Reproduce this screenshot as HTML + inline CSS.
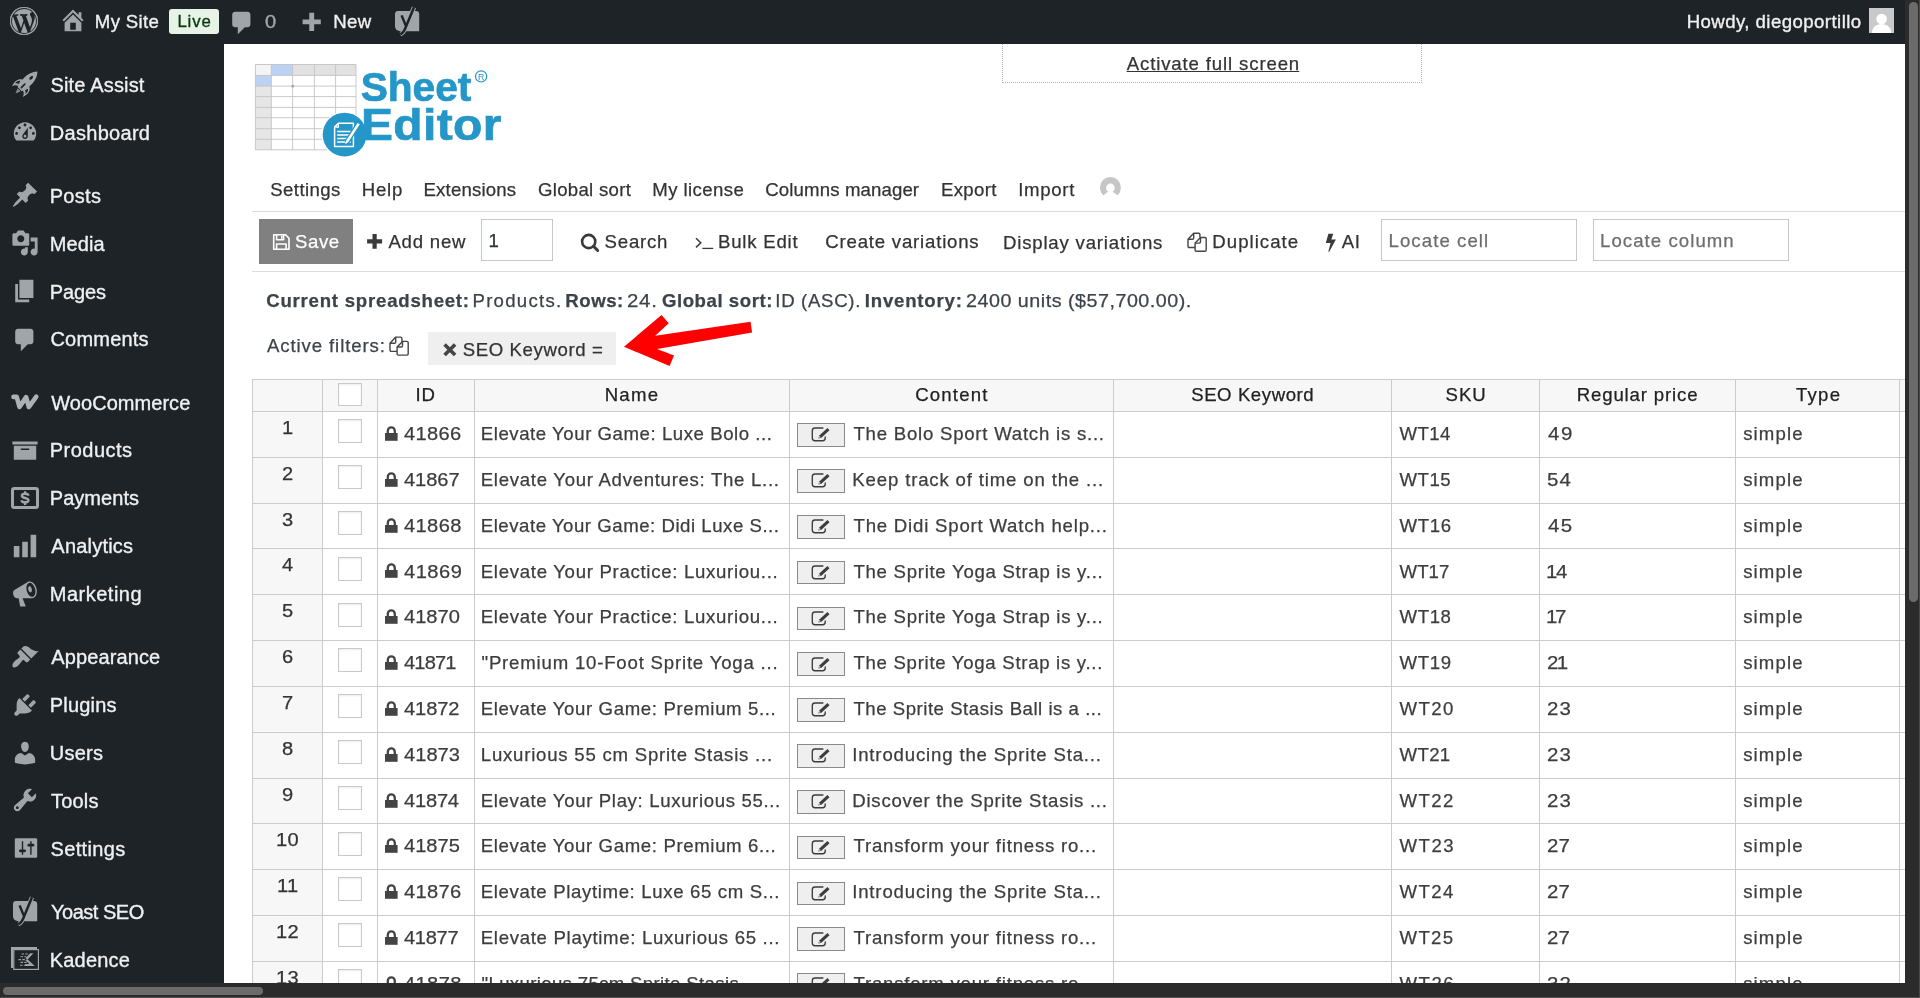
<!DOCTYPE html>
<html lang="en">
<head>
<meta charset="utf-8">
<title>WP Sheet Editor - Products</title>
<style>
html,body{margin:0;padding:0}
body{width:1920px;height:998px;overflow:hidden;position:relative;background:#fff;font-family:"Liberation Sans",sans-serif;color:#333;font-size:18.6px}
.abs,.t,svg,.ln,.cb,.eb{position:absolute}
.t{white-space:pre;line-height:1;-webkit-text-stroke:.25px currentColor}
#content,#sidemenu,#barmenu{position:absolute;left:0;top:0;width:1920px;height:998px;will-change:transform}
#sidemenu .t,#barmenu .t{-webkit-text-stroke:.35px currentColor}
svg{overflow:visible}
#bar{left:0;top:0;width:1905px;height:44px;background:#1d2327}
#side{left:0;top:44px;width:224px;height:939px;background:#1d2327}
#vs{left:1905px;top:0;width:15px;height:998px;background:#2b2b2b}
#vs i{position:absolute;left:4px;top:2px;width:8.5px;height:600px;border-radius:4.5px;background:#6b6b6b}
#hs{left:0;top:983px;width:1905px;height:15px;background:#2b2b2b}
#hs i{position:absolute;left:3px;top:4px;width:260px;height:8px;border-radius:4px;background:#6b6b6b}
.di{fill:#a0a5aa}
.ln{background:#ccc}
.cb{width:22px;height:22px;border:1px solid #c9c9c9;background:#fff;box-shadow:inset 0 1px 2px rgba(0,0,0,.08)}
.eb{width:45.7px;height:21.7px;border:1px solid #8a8a8a;background:#efefef}
.inp{border:1px solid #c8c8c8;background:#fff;box-sizing:border-box}
</style>
</head>
<body>
<!-- ================= content ================= -->
<div id="content">
<svg style="left:0;top:0" width="560" height="170" viewBox="0 0 560 170">
<rect x="255.400" y="64.500" width="100.600" height="85.300" fill="#fff"/>
<rect x="255.400" y="64.500" width="100.600" height="10.900" fill="#e2e2e2"/>
<rect x="255.400" y="64.500" width="15.900" height="85.300" fill="#e6e6e6"/>
<rect x="255.400" y="64.500" width="15.900" height="10.900" fill="#f4f4f4"/>
<rect x="271.300" y="64.500" width="21.300" height="10.900" fill="#bcd2f5"/>
<rect x="255.400" y="75.400" width="15.900" height="10.700" fill="#bcd2f5"/>
<path d="M255.4 64.500V149.800" stroke="#c4c4c4" stroke-width=".9"/>
<path d="M271.3 64.500V149.800" stroke="#c4c4c4" stroke-width=".9"/>
<path d="M292.6 64.500V149.800" stroke="#c4c4c4" stroke-width=".9"/>
<path d="M314.4 64.500V149.800" stroke="#c4c4c4" stroke-width=".9"/>
<path d="M335.6 64.500V149.800" stroke="#c4c4c4" stroke-width=".9"/>
<path d="M356.0 64.500V149.800" stroke="#c4c4c4" stroke-width=".9"/>
<path d="M255.400 64.5H356" stroke="#c4c4c4" stroke-width=".9"/>
<path d="M255.400 75.4H356" stroke="#c4c4c4" stroke-width=".9"/>
<path d="M255.400 86.1H356" stroke="#c4c4c4" stroke-width=".9"/>
<path d="M255.400 96.6H356" stroke="#c4c4c4" stroke-width=".9"/>
<path d="M255.400 107.4H356" stroke="#c4c4c4" stroke-width=".9"/>
<path d="M255.400 117.7H356" stroke="#c4c4c4" stroke-width=".9"/>
<path d="M255.400 128.7H356" stroke="#c4c4c4" stroke-width=".9"/>
<path d="M255.400 139.3H356" stroke="#c4c4c4" stroke-width=".9"/>
<path d="M255.400 149.8H356" stroke="#c4c4c4" stroke-width=".9"/>
<rect x="291.600" y="85.100" width="2.200" height="2.200" fill="#9a9a9a"/>
<circle cx="344.600" cy="134.600" r="23.200" fill="#fff"/>
<circle cx="344.600" cy="134.600" r="21.900" fill="#2596c8"/>
<path fill="none" stroke="#fff" stroke-width="1.500" stroke-linejoin="round" d="M338.400 123.200H353.400V146.600H334.600V127z"/>
<path fill="none" stroke="#fff" stroke-width="1.300" d="M338.400 123.200V127H334.600M337.200 131.500H350.800M337.200 135H350.800M337.200 138.500H350.800M337.200 142H350.800"/>
<path stroke="#2596c8" stroke-width="5.200" d="M358.400 124.200L346.600 142.400"/>
<path stroke="#fff" stroke-width="2.600" d="M358.700 123.600L347.600 140.800"/>
<path fill="#fff" d="M346.300 139.900L348.900 141.600 345.300 144.400z"/>
<circle cx="481.100" cy="76.400" r="5.600" fill="none" stroke="#2596c8" stroke-width="1.200"/>
<text x="481.100" y="79.500" font-family="Liberation Sans, sans-serif" font-size="8.800" font-weight="400" text-anchor="middle" fill="#2596c8">R</text>
</svg>
<div class="abs" style="left:1002px;top:40px;width:418px;height:41px;border:1px dotted #b5b5b5"></div>
<div class="ln" style="left:252px;top:211px;width:1653px;height:1px;background:#dcdcdc"></div>
<div class="ln" style="left:252px;top:271px;width:1653px;height:1px;background:#dcdcdc"></div>
<div class="abs" style="left:259px;top:219px;width:94px;height:44.6px;background:#808080"></div>
<div class="abs inp" style="left:481px;top:219px;width:72px;height:42px"></div>
<div class="abs inp" style="left:1381px;top:219px;width:196px;height:42px"></div>
<div class="abs inp" style="left:1593px;top:219px;width:196px;height:42px"></div>
<div class="abs" style="left:428.2px;top:332.4px;width:187.6px;height:32.2px;background:#efefef"></div>
<svg style="left:0;top:0" width="1905" height="380" viewBox="0 0 1905 380">
<g fill="none" stroke="#fff" stroke-width="1.600" stroke-linejoin="round"><path d="M273.700 234.800H285.600L289 238.200V249.200H273.700z"/><path d="M276.600 234.800V239.800H283.600V234.800M276.600 249.200V244H286.100V249.200"/></g><rect x="281" y="235.600" width="1.600" height="3.200" fill="#fff"/>
<path fill="#3a3a3a" d="M372.500 234h4.200v5.300h5.400v4.200h-5.400v5.300h-4.200v-5.300h-5.400v-4.200h5.400z"/>
<circle cx="588.700" cy="241.500" r="6.600" fill="none" stroke="#3a3a3a" stroke-width="2.600"/><path stroke="#3a3a3a" stroke-width="2.900" stroke-linecap="round" d="M593.600 246.400L597.700 250.500"/>
<path fill="none" stroke="#3a3a3a" stroke-width="1.500" d="M696 238.200L700.800 242.800 696 247.400"/><path stroke="#3a3a3a" stroke-width="1.300" d="M702.300 248.400H713.200"/>
<g transform="translate(1187.3 232.5)" fill="none" stroke="#444" stroke-width="1.400" stroke-linejoin="round"><path d="M7.800 15H2C1.200 15 .7 14.500 .7 13.700V6.800L6.400 .7H11.300C12.100 .7 12.600 1.200 12.600 2V5"/><path d="M6.400 .7V5.500C6.400 6.300 5.900 6.800 5.100 6.800H.7"/><path d="M13.200 5H17.600C18.400 5 18.900 5.500 18.900 6.300V17.400C18.900 18.200 18.400 18.700 17.600 18.700H9.100C8.300 18.700 7.800 18.200 7.800 17.400V10.600z"/><path d="M13.200 5V9.300C13.200 10.100 12.700 10.600 11.900 10.600H7.800"/></g>
<g transform="translate(389.3 336.4)" fill="none" stroke="#444" stroke-width="1.400" stroke-linejoin="round"><path d="M7.800 15H2C1.200 15 .7 14.500 .7 13.700V6.800L6.400 .7H11.300C12.100 .7 12.600 1.200 12.600 2V5"/><path d="M6.400 .7V5.500C6.400 6.300 5.900 6.800 5.100 6.800H.7"/><path d="M13.200 5H17.600C18.400 5 18.900 5.500 18.900 6.300V17.400C18.900 18.200 18.400 18.700 17.600 18.700H9.100C8.300 18.700 7.800 18.200 7.800 17.400V10.600z"/><path d="M13.200 5V9.300C13.200 10.100 12.700 10.600 11.900 10.600H7.800"/></g>
<path fill="#3a3a3a" d="M1328.400 233.700h4.900l-2 5.800h4.600l-6.700 12.300h-.9l2.300-8.700h-4.800z"/>
<path stroke="#444" stroke-width="3.600" d="M444.600 344.400L455.100 354.900M455.100 344.400L444.600 354.900"/>
<clipPath id="spc"><rect x="1095" y="170" width="32" height="25.700"/></clipPath><circle cx="1110.400" cy="187.500" r="10.500" fill="#c6c6c6" clip-path="url(#spc)"/><circle cx="1110.400" cy="188" r="4.400" fill="#fff"/><path fill="#fff" d="M1110.400 189.900L1119.200 196.400H1101.600z"/>
<path fill="#fe0000" d="M624 346.800L661.500 315 668.750 323.300 655.200 335.800 750.500 321.800 752.100 332.500 657.100 348.900 674 355.400 669.600 366z"/>
</svg>
<span class="t" style="left:360.63px;top:67.00px;font-size:40.70px;letter-spacing:-0.036px;font-weight:700;color:#2596c8;-webkit-text-stroke:.7px #2596c8;">Sheet</span>
<span class="t" style="left:361.09px;top:104.00px;font-size:43.60px;letter-spacing:0.328px;font-weight:700;color:#2596c8;transform:scaleX(1.100);transform-origin:0 0;-webkit-text-stroke:.7px #2596c8;">Editor</span>
<span class="t" style="left:270.16px;top:181.00px;font-size:18.60px;letter-spacing:0.440px;">Settings</span>
<span class="t" style="left:361.72px;top:181.00px;font-size:18.60px;letter-spacing:0.769px;">Help</span>
<span class="t" style="left:423.47px;top:181.00px;font-size:18.60px;letter-spacing:0.192px;">Extensions</span>
<span class="t" style="left:538.06px;top:181.00px;font-size:18.60px;letter-spacing:0.290px;">Global sort</span>
<span class="t" style="left:652.22px;top:181.00px;font-size:18.60px;letter-spacing:0.418px;">My license</span>
<span class="t" style="left:765.31px;top:181.00px;font-size:18.60px;letter-spacing:0.131px;">Columns manager</span>
<span class="t" style="left:940.97px;top:181.00px;font-size:18.60px;letter-spacing:0.332px;">Export</span>
<span class="t" style="left:1018.28px;top:181.00px;font-size:18.60px;letter-spacing:0.680px;">Import</span>
<span class="t" style="left:1126.71px;top:55.00px;font-size:18.60px;letter-spacing:0.865px;text-decoration:underline;text-underline-offset:1px;">Activate full scree<span style="letter-spacing:0">n</span></span>
<span class="t" style="left:294.96px;top:233.00px;font-size:18.60px;letter-spacing:0.593px;color:#fff;">Save</span>
<span class="t" style="left:388.46px;top:233.00px;font-size:18.60px;letter-spacing:0.769px;">Add new</span>
<span class="t" style="left:488.58px;top:232.00px;font-size:18.60px;color:#2c3338;">1</span>
<span class="t" style="left:604.56px;top:233.00px;font-size:18.60px;letter-spacing:0.796px;">Search</span>
<span class="t" style="left:717.97px;top:233.00px;font-size:18.60px;letter-spacing:0.784px;">Bulk Edit</span>
<span class="t" style="left:825.31px;top:233.00px;font-size:18.60px;letter-spacing:0.800px;">Create variations</span>
<span class="t" style="left:1002.97px;top:234.00px;font-size:18.60px;letter-spacing:0.808px;">Display variations</span>
<span class="t" style="left:1212.37px;top:233.00px;font-size:18.60px;letter-spacing:1.028px;">Duplicate</span>
<span class="t" style="left:1341.86px;top:233.00px;font-size:18.60px;letter-spacing:0.475px;">AI</span>
<span class="t" style="left:1388.47px;top:232.00px;font-size:18.60px;letter-spacing:1.086px;color:#6d6d6d;">Locate cell</span>
<span class="t" style="left:1599.97px;top:232.00px;font-size:18.60px;letter-spacing:1.066px;color:#6d6d6d;">Locate column</span>
<span class="t" style="left:266.24px;top:292.00px;font-size:18.60px;letter-spacing:0.776px;font-weight:700;color:#3c434a;">Current spreadsheet:</span>
<span class="t" style="left:472.47px;top:292.00px;font-size:18.60px;letter-spacing:1.272px;color:#3c434a;">Products.</span>
<span class="t" style="left:565.26px;top:292.00px;font-size:18.60px;letter-spacing:0.563px;font-weight:700;color:#3c434a;">Rows:</span>
<span class="t" style="left:627.22px;top:292.00px;font-size:18.60px;letter-spacing:0.660px;color:#3c434a;transform:scaleX(1.100);transform-origin:0 0;">24.</span>
<span class="t" style="left:661.94px;top:292.00px;font-size:18.60px;letter-spacing:0.555px;font-weight:700;color:#3c434a;">Global sort:</span>
<span class="t" style="left:775.28px;top:292.00px;font-size:18.60px;letter-spacing:0.696px;color:#3c434a;">ID (ASC).</span>
<span class="t" style="left:864.76px;top:292.00px;font-size:18.60px;letter-spacing:0.805px;font-weight:700;color:#3c434a;">Inventory:</span>
<span class="t" style="left:966.11px;top:292.00px;font-size:18.60px;letter-spacing:0.476px;color:#3c434a;transform:scaleX(1.060);transform-origin:0 0;">2400 units ($57,700.00).</span>
<span class="t" style="left:266.96px;top:337.00px;font-size:18.60px;letter-spacing:0.900px;color:#3c434a;">Active filters:</span>
<span class="t" style="left:462.66px;top:341.00px;font-size:18.60px;letter-spacing:0.621px;">SEO Keyword =</span>
<div id="table">
<div class="abs" style="left:252px;top:379px;width:1653px;height:33px;background:#f7f7f7"></div>
<div class="abs" style="left:252px;top:411px;width:71px;height:575px;background:#f7f7f7"></div>
<div class="ln" style="left:252px;top:379px;width:1653px;height:1px"></div>
<div class="ln" style="left:252px;top:411px;width:1653px;height:1px"></div>
<div class="ln" style="left:252px;top:457px;width:1653px;height:1px"></div>
<div class="ln" style="left:252px;top:503px;width:1653px;height:1px"></div>
<div class="ln" style="left:252px;top:548px;width:1653px;height:1px"></div>
<div class="ln" style="left:252px;top:594px;width:1653px;height:1px"></div>
<div class="ln" style="left:252px;top:640px;width:1653px;height:1px"></div>
<div class="ln" style="left:252px;top:686px;width:1653px;height:1px"></div>
<div class="ln" style="left:252px;top:732px;width:1653px;height:1px"></div>
<div class="ln" style="left:252px;top:778px;width:1653px;height:1px"></div>
<div class="ln" style="left:252px;top:823px;width:1653px;height:1px"></div>
<div class="ln" style="left:252px;top:869px;width:1653px;height:1px"></div>
<div class="ln" style="left:252px;top:915px;width:1653px;height:1px"></div>
<div class="ln" style="left:252px;top:961px;width:1653px;height:1px"></div>
<div class="ln" style="left:252px;top:379px;width:1px;height:610px"></div>
<div class="ln" style="left:322px;top:379px;width:1px;height:610px"></div>
<div class="ln" style="left:377px;top:379px;width:1px;height:610px"></div>
<div class="ln" style="left:474px;top:379px;width:1px;height:610px"></div>
<div class="ln" style="left:789px;top:379px;width:1px;height:610px"></div>
<div class="ln" style="left:1113px;top:379px;width:1px;height:610px"></div>
<div class="ln" style="left:1391px;top:379px;width:1px;height:610px"></div>
<div class="ln" style="left:1539px;top:379px;width:1px;height:610px"></div>
<div class="ln" style="left:1735px;top:379px;width:1px;height:610px"></div>
<div class="ln" style="left:1899px;top:379px;width:1px;height:610px"></div>
<div class="cb" style="left:338px;top:383px;height:21px"></div>
<div class="cb" style="left:338px;top:419px"></div>
<svg style="left:384px;top:424.90px" width="16" height="18" viewBox="0 0 16 18"><path fill="#444" d="M1 8h12.600v7.800H1z"/><path fill="none" stroke="#444" stroke-width="2.300" d="M3.800 8.500V5.900a3.500 3.500 0 0 1 7 0V8.500"/></svg>
<div class="eb" style="left:797px;top:423.20px"></div>
<svg style="left:810px;top:426.40px" width="22" height="18" viewBox="0 0 22 18"><path fill="none" stroke="#3c3c3c" stroke-width="1.350" stroke-linecap="round" d="M12.900 2H5C3.300 2 2.300 3 2.300 4.700V12.050C2.300 13.750 3.300 14.750 5 14.750H12.550C14.250 14.750 15.250 13.750 15.250 12.050V11"/><path fill="#3c3c3c" d="M8.300 12.500L9.290 9.410 17.450 2.020 19.530 4.320 11.370 11.710z"/><circle cx="9.600" cy="11.100" r=".75" fill="#efefef"/></svg>
<div class="cb" style="left:338px;top:465px"></div>
<svg style="left:384px;top:470.73px" width="16" height="18" viewBox="0 0 16 18"><path fill="#444" d="M1 8h12.600v7.800H1z"/><path fill="none" stroke="#444" stroke-width="2.300" d="M3.800 8.500V5.900a3.500 3.500 0 0 1 7 0V8.500"/></svg>
<div class="eb" style="left:797px;top:469.03px"></div>
<svg style="left:810px;top:472.23px" width="22" height="18" viewBox="0 0 22 18"><path fill="none" stroke="#3c3c3c" stroke-width="1.350" stroke-linecap="round" d="M12.900 2H5C3.300 2 2.300 3 2.300 4.700V12.050C2.300 13.750 3.300 14.750 5 14.750H12.550C14.250 14.750 15.250 13.750 15.250 12.050V11"/><path fill="#3c3c3c" d="M8.300 12.500L9.290 9.410 17.450 2.020 19.530 4.320 11.370 11.710z"/><circle cx="9.600" cy="11.100" r=".75" fill="#efefef"/></svg>
<div class="cb" style="left:338px;top:511px"></div>
<svg style="left:384px;top:516.56px" width="16" height="18" viewBox="0 0 16 18"><path fill="#444" d="M1 8h12.600v7.800H1z"/><path fill="none" stroke="#444" stroke-width="2.300" d="M3.800 8.500V5.900a3.500 3.500 0 0 1 7 0V8.500"/></svg>
<div class="eb" style="left:797px;top:514.86px"></div>
<svg style="left:810px;top:518.06px" width="22" height="18" viewBox="0 0 22 18"><path fill="none" stroke="#3c3c3c" stroke-width="1.350" stroke-linecap="round" d="M12.900 2H5C3.300 2 2.300 3 2.300 4.700V12.050C2.300 13.750 3.300 14.750 5 14.750H12.550C14.250 14.750 15.250 13.750 15.250 12.050V11"/><path fill="#3c3c3c" d="M8.300 12.500L9.290 9.410 17.450 2.020 19.530 4.320 11.370 11.710z"/><circle cx="9.600" cy="11.100" r=".75" fill="#efefef"/></svg>
<div class="cb" style="left:338px;top:557px"></div>
<svg style="left:384px;top:562.39px" width="16" height="18" viewBox="0 0 16 18"><path fill="#444" d="M1 8h12.600v7.800H1z"/><path fill="none" stroke="#444" stroke-width="2.300" d="M3.800 8.500V5.900a3.500 3.500 0 0 1 7 0V8.500"/></svg>
<div class="eb" style="left:797px;top:560.69px"></div>
<svg style="left:810px;top:563.89px" width="22" height="18" viewBox="0 0 22 18"><path fill="none" stroke="#3c3c3c" stroke-width="1.350" stroke-linecap="round" d="M12.900 2H5C3.300 2 2.300 3 2.300 4.700V12.050C2.300 13.750 3.300 14.750 5 14.750H12.550C14.250 14.750 15.250 13.750 15.250 12.050V11"/><path fill="#3c3c3c" d="M8.300 12.500L9.290 9.410 17.450 2.020 19.530 4.320 11.370 11.710z"/><circle cx="9.600" cy="11.100" r=".75" fill="#efefef"/></svg>
<div class="cb" style="left:338px;top:603px"></div>
<svg style="left:384px;top:608.22px" width="16" height="18" viewBox="0 0 16 18"><path fill="#444" d="M1 8h12.600v7.800H1z"/><path fill="none" stroke="#444" stroke-width="2.300" d="M3.800 8.500V5.900a3.500 3.500 0 0 1 7 0V8.500"/></svg>
<div class="eb" style="left:797px;top:606.52px"></div>
<svg style="left:810px;top:609.72px" width="22" height="18" viewBox="0 0 22 18"><path fill="none" stroke="#3c3c3c" stroke-width="1.350" stroke-linecap="round" d="M12.900 2H5C3.300 2 2.300 3 2.300 4.700V12.050C2.300 13.750 3.300 14.750 5 14.750H12.550C14.250 14.750 15.250 13.750 15.250 12.050V11"/><path fill="#3c3c3c" d="M8.300 12.500L9.290 9.410 17.450 2.020 19.530 4.320 11.370 11.710z"/><circle cx="9.600" cy="11.100" r=".75" fill="#efefef"/></svg>
<div class="cb" style="left:338px;top:648px"></div>
<svg style="left:384px;top:654.05px" width="16" height="18" viewBox="0 0 16 18"><path fill="#444" d="M1 8h12.600v7.800H1z"/><path fill="none" stroke="#444" stroke-width="2.300" d="M3.800 8.500V5.900a3.500 3.500 0 0 1 7 0V8.500"/></svg>
<div class="eb" style="left:797px;top:652.35px"></div>
<svg style="left:810px;top:655.55px" width="22" height="18" viewBox="0 0 22 18"><path fill="none" stroke="#3c3c3c" stroke-width="1.350" stroke-linecap="round" d="M12.900 2H5C3.300 2 2.300 3 2.300 4.700V12.050C2.300 13.750 3.300 14.750 5 14.750H12.550C14.250 14.750 15.250 13.750 15.250 12.050V11"/><path fill="#3c3c3c" d="M8.300 12.500L9.290 9.410 17.450 2.020 19.530 4.320 11.370 11.710z"/><circle cx="9.600" cy="11.100" r=".75" fill="#efefef"/></svg>
<div class="cb" style="left:338px;top:694px"></div>
<svg style="left:384px;top:699.88px" width="16" height="18" viewBox="0 0 16 18"><path fill="#444" d="M1 8h12.600v7.800H1z"/><path fill="none" stroke="#444" stroke-width="2.300" d="M3.800 8.500V5.900a3.500 3.500 0 0 1 7 0V8.500"/></svg>
<div class="eb" style="left:797px;top:698.18px"></div>
<svg style="left:810px;top:701.38px" width="22" height="18" viewBox="0 0 22 18"><path fill="none" stroke="#3c3c3c" stroke-width="1.350" stroke-linecap="round" d="M12.900 2H5C3.300 2 2.300 3 2.300 4.700V12.050C2.300 13.750 3.300 14.750 5 14.750H12.550C14.250 14.750 15.250 13.750 15.250 12.050V11"/><path fill="#3c3c3c" d="M8.300 12.500L9.290 9.410 17.450 2.020 19.530 4.320 11.370 11.710z"/><circle cx="9.600" cy="11.100" r=".75" fill="#efefef"/></svg>
<div class="cb" style="left:338px;top:740px"></div>
<svg style="left:384px;top:745.71px" width="16" height="18" viewBox="0 0 16 18"><path fill="#444" d="M1 8h12.600v7.800H1z"/><path fill="none" stroke="#444" stroke-width="2.300" d="M3.800 8.500V5.900a3.500 3.500 0 0 1 7 0V8.500"/></svg>
<div class="eb" style="left:797px;top:744.01px"></div>
<svg style="left:810px;top:747.21px" width="22" height="18" viewBox="0 0 22 18"><path fill="none" stroke="#3c3c3c" stroke-width="1.350" stroke-linecap="round" d="M12.900 2H5C3.300 2 2.300 3 2.300 4.700V12.050C2.300 13.750 3.300 14.750 5 14.750H12.550C14.250 14.750 15.250 13.750 15.250 12.050V11"/><path fill="#3c3c3c" d="M8.300 12.500L9.290 9.410 17.450 2.020 19.530 4.320 11.370 11.710z"/><circle cx="9.600" cy="11.100" r=".75" fill="#efefef"/></svg>
<div class="cb" style="left:338px;top:786px"></div>
<svg style="left:384px;top:791.54px" width="16" height="18" viewBox="0 0 16 18"><path fill="#444" d="M1 8h12.600v7.800H1z"/><path fill="none" stroke="#444" stroke-width="2.300" d="M3.800 8.500V5.900a3.500 3.500 0 0 1 7 0V8.500"/></svg>
<div class="eb" style="left:797px;top:789.84px"></div>
<svg style="left:810px;top:793.04px" width="22" height="18" viewBox="0 0 22 18"><path fill="none" stroke="#3c3c3c" stroke-width="1.350" stroke-linecap="round" d="M12.900 2H5C3.300 2 2.300 3 2.300 4.700V12.050C2.300 13.750 3.300 14.750 5 14.750H12.550C14.250 14.750 15.250 13.750 15.250 12.050V11"/><path fill="#3c3c3c" d="M8.300 12.500L9.290 9.410 17.450 2.020 19.530 4.320 11.370 11.710z"/><circle cx="9.600" cy="11.100" r=".75" fill="#efefef"/></svg>
<div class="cb" style="left:338px;top:832px"></div>
<svg style="left:384px;top:837.37px" width="16" height="18" viewBox="0 0 16 18"><path fill="#444" d="M1 8h12.600v7.800H1z"/><path fill="none" stroke="#444" stroke-width="2.300" d="M3.800 8.500V5.900a3.500 3.500 0 0 1 7 0V8.500"/></svg>
<div class="eb" style="left:797px;top:835.67px"></div>
<svg style="left:810px;top:838.87px" width="22" height="18" viewBox="0 0 22 18"><path fill="none" stroke="#3c3c3c" stroke-width="1.350" stroke-linecap="round" d="M12.900 2H5C3.300 2 2.300 3 2.300 4.700V12.050C2.300 13.750 3.300 14.750 5 14.750H12.550C14.250 14.750 15.250 13.750 15.250 12.050V11"/><path fill="#3c3c3c" d="M8.300 12.500L9.290 9.410 17.450 2.020 19.530 4.320 11.370 11.710z"/><circle cx="9.600" cy="11.100" r=".75" fill="#efefef"/></svg>
<div class="cb" style="left:338px;top:877px"></div>
<svg style="left:384px;top:883.20px" width="16" height="18" viewBox="0 0 16 18"><path fill="#444" d="M1 8h12.600v7.800H1z"/><path fill="none" stroke="#444" stroke-width="2.300" d="M3.800 8.500V5.900a3.500 3.500 0 0 1 7 0V8.500"/></svg>
<div class="eb" style="left:797px;top:881.50px"></div>
<svg style="left:810px;top:884.70px" width="22" height="18" viewBox="0 0 22 18"><path fill="none" stroke="#3c3c3c" stroke-width="1.350" stroke-linecap="round" d="M12.900 2H5C3.300 2 2.300 3 2.300 4.700V12.050C2.300 13.750 3.300 14.750 5 14.750H12.550C14.250 14.750 15.250 13.750 15.250 12.050V11"/><path fill="#3c3c3c" d="M8.300 12.500L9.290 9.410 17.450 2.020 19.530 4.320 11.370 11.710z"/><circle cx="9.600" cy="11.100" r=".75" fill="#efefef"/></svg>
<div class="cb" style="left:338px;top:923px"></div>
<svg style="left:384px;top:929.03px" width="16" height="18" viewBox="0 0 16 18"><path fill="#444" d="M1 8h12.600v7.800H1z"/><path fill="none" stroke="#444" stroke-width="2.300" d="M3.800 8.500V5.900a3.500 3.500 0 0 1 7 0V8.500"/></svg>
<div class="eb" style="left:797px;top:927.33px"></div>
<svg style="left:810px;top:930.53px" width="22" height="18" viewBox="0 0 22 18"><path fill="none" stroke="#3c3c3c" stroke-width="1.350" stroke-linecap="round" d="M12.900 2H5C3.300 2 2.300 3 2.300 4.700V12.050C2.300 13.750 3.300 14.750 5 14.750H12.550C14.250 14.750 15.250 13.750 15.250 12.050V11"/><path fill="#3c3c3c" d="M8.300 12.500L9.290 9.410 17.450 2.020 19.530 4.320 11.370 11.710z"/><circle cx="9.600" cy="11.100" r=".75" fill="#efefef"/></svg>
<div class="cb" style="left:338px;top:969px"></div>
<svg style="left:384px;top:974.86px" width="16" height="18" viewBox="0 0 16 18"><path fill="#444" d="M1 8h12.600v7.800H1z"/><path fill="none" stroke="#444" stroke-width="2.300" d="M3.800 8.500V5.900a3.500 3.500 0 0 1 7 0V8.500"/></svg>
<div class="eb" style="left:797px;top:973.16px"></div>
<svg style="left:810px;top:976.36px" width="22" height="18" viewBox="0 0 22 18"><path fill="none" stroke="#3c3c3c" stroke-width="1.350" stroke-linecap="round" d="M12.900 2H5C3.300 2 2.300 3 2.300 4.700V12.050C2.300 13.750 3.300 14.750 5 14.750H12.550C14.250 14.750 15.250 13.750 15.250 12.050V11"/><path fill="#3c3c3c" d="M8.300 12.500L9.290 9.410 17.450 2.020 19.530 4.320 11.370 11.710z"/><circle cx="9.600" cy="11.100" r=".75" fill="#efefef"/></svg>
<span class="t" style="left:415.58px;top:386.00px;font-size:18.60px;letter-spacing:0.713px;color:#222;">ID</span>
<span class="t" style="left:604.67px;top:386.00px;font-size:18.60px;letter-spacing:1.281px;color:#222;">Name</span>
<span class="t" style="left:915.26px;top:386.00px;font-size:18.60px;letter-spacing:1.159px;color:#222;">Content</span>
<span class="t" style="left:1191.16px;top:386.00px;font-size:18.60px;letter-spacing:0.576px;color:#222;">SEO Keyword</span>
<span class="t" style="left:1445.46px;top:386.00px;font-size:18.60px;letter-spacing:1.023px;color:#222;">SKU</span>
<span class="t" style="left:1576.77px;top:386.00px;font-size:18.60px;letter-spacing:0.847px;color:#222;">Regular price</span>
<span class="t" style="left:1795.88px;top:386.00px;font-size:18.60px;letter-spacing:1.277px;color:#222;">Type</span>
<span class="t rn" style="left:281.71px;top:419.00px;font-size:18.60px;letter-spacing:0.300px;transform:scaleX(1.080);transform-origin:0 0;">1</span>
<span class="t" style="left:403.64px;top:425.00px;font-size:18.60px;letter-spacing:0.321px;color:#3d3d3d;transform:scaleX(1.080);transform-origin:0 0;">41866</span>
<span class="t" style="left:480.77px;top:425.00px;font-size:18.60px;letter-spacing:0.558px;color:#3d3d3d;">Elevate Your Game: Luxe Bolo ...</span>
<span class="t" style="left:853.48px;top:425.00px;font-size:18.60px;letter-spacing:0.769px;color:#3d3d3d;">The Bolo Sport Watch is s...</span>
<span class="t" style="left:1399.62px;top:425.00px;font-size:18.60px;letter-spacing:0.378px;color:#3d3d3d;">WT14</span>
<span class="t" style="left:1547.53px;top:425.00px;font-size:18.60px;letter-spacing:1.529px;color:#3d3d3d;transform:scaleX(1.100);transform-origin:0 0;">49</span>
<span class="t" style="left:1743.18px;top:425.00px;font-size:18.60px;letter-spacing:1.122px;color:#3d3d3d;">simple</span>
<span class="t rn" style="left:281.71px;top:465.00px;font-size:18.60px;letter-spacing:0.300px;transform:scaleX(1.080);transform-origin:0 0;">2</span>
<span class="t" style="left:403.64px;top:471.00px;font-size:18.60px;letter-spacing:-0.066px;color:#3d3d3d;transform:scaleX(1.080);transform-origin:0 0;">41867</span>
<span class="t" style="left:480.77px;top:471.00px;font-size:18.60px;letter-spacing:0.705px;color:#3d3d3d;">Elevate Your Adventures: The L...</span>
<span class="t" style="left:852.37px;top:471.00px;font-size:18.60px;letter-spacing:0.837px;color:#3d3d3d;">Keep track of time on the ...</span>
<span class="t" style="left:1399.62px;top:471.00px;font-size:18.60px;letter-spacing:0.456px;color:#3d3d3d;">WT15</span>
<span class="t" style="left:1547.18px;top:471.00px;font-size:18.60px;letter-spacing:0.966px;color:#3d3d3d;transform:scaleX(1.100);transform-origin:0 0;">54</span>
<span class="t" style="left:1743.18px;top:471.00px;font-size:18.60px;letter-spacing:1.122px;color:#3d3d3d;">simple</span>
<span class="t rn" style="left:281.71px;top:511.00px;font-size:18.60px;letter-spacing:0.300px;transform:scaleX(1.080);transform-origin:0 0;">3</span>
<span class="t" style="left:403.64px;top:517.00px;font-size:18.60px;letter-spacing:0.365px;color:#3d3d3d;transform:scaleX(1.080);transform-origin:0 0;">41868</span>
<span class="t" style="left:480.77px;top:517.00px;font-size:18.60px;letter-spacing:0.534px;color:#3d3d3d;">Elevate Your Game: Didi Luxe S...</span>
<span class="t" style="left:853.48px;top:517.00px;font-size:18.60px;letter-spacing:0.799px;color:#3d3d3d;">The Didi Sport Watch help...</span>
<span class="t" style="left:1399.62px;top:517.00px;font-size:18.60px;letter-spacing:0.668px;color:#3d3d3d;">WT16</span>
<span class="t" style="left:1547.53px;top:517.00px;font-size:18.60px;letter-spacing:1.157px;color:#3d3d3d;transform:scaleX(1.100);transform-origin:0 0;">45</span>
<span class="t" style="left:1743.18px;top:517.00px;font-size:18.60px;letter-spacing:1.122px;color:#3d3d3d;">simple</span>
<span class="t rn" style="left:281.71px;top:556.00px;font-size:18.60px;letter-spacing:0.300px;transform:scaleX(1.080);transform-origin:0 0;">4</span>
<span class="t" style="left:403.64px;top:563.00px;font-size:18.60px;letter-spacing:0.453px;color:#3d3d3d;transform:scaleX(1.080);transform-origin:0 0;">41869</span>
<span class="t" style="left:480.77px;top:563.00px;font-size:18.60px;letter-spacing:0.698px;color:#3d3d3d;">Elevate Your Practice: Luxuriou...</span>
<span class="t" style="left:853.48px;top:563.00px;font-size:18.60px;letter-spacing:0.718px;color:#3d3d3d;">The Sprite Yoga Strap is y...</span>
<span class="t" style="left:1399.62px;top:563.00px;font-size:18.60px;letter-spacing:0.041px;color:#3d3d3d;">WT17</span>
<span class="t" style="left:1546.44px;top:563.00px;font-size:18.60px;letter-spacing:-1.180px;color:#3d3d3d;transform:scaleX(1.100);transform-origin:0 0;">14</span>
<span class="t" style="left:1743.18px;top:563.00px;font-size:18.60px;letter-spacing:1.122px;color:#3d3d3d;">simple</span>
<span class="t rn" style="left:281.71px;top:602.00px;font-size:18.60px;letter-spacing:0.300px;transform:scaleX(1.080);transform-origin:0 0;">5</span>
<span class="t" style="left:403.64px;top:608.00px;font-size:18.60px;color:#3d3d3d;transform:scaleX(1.080);transform-origin:0 0;">41870</span>
<span class="t" style="left:480.77px;top:608.00px;font-size:18.60px;letter-spacing:0.698px;color:#3d3d3d;">Elevate Your Practice: Luxuriou...</span>
<span class="t" style="left:853.48px;top:608.00px;font-size:18.60px;letter-spacing:0.718px;color:#3d3d3d;">The Sprite Yoga Strap is y...</span>
<span class="t" style="left:1399.62px;top:608.00px;font-size:18.60px;letter-spacing:0.565px;color:#3d3d3d;">WT18</span>
<span class="t" style="left:1546.44px;top:608.00px;font-size:18.60px;letter-spacing:-2.063px;color:#3d3d3d;transform:scaleX(1.100);transform-origin:0 0;">17</span>
<span class="t" style="left:1743.18px;top:608.00px;font-size:18.60px;letter-spacing:1.122px;color:#3d3d3d;">simple</span>
<span class="t rn" style="left:281.71px;top:648.00px;font-size:18.60px;letter-spacing:0.300px;transform:scaleX(1.080);transform-origin:0 0;">6</span>
<span class="t" style="left:403.64px;top:654.00px;font-size:18.60px;letter-spacing:-0.790px;color:#3d3d3d;transform:scaleX(1.080);transform-origin:0 0;">41871</span>
<span class="t" style="left:481.51px;top:654.00px;font-size:18.60px;letter-spacing:0.806px;color:#3d3d3d;">&quot;Premium 10-Foot Sprite Yoga ...</span>
<span class="t" style="left:853.48px;top:654.00px;font-size:18.60px;letter-spacing:0.707px;color:#3d3d3d;">The Sprite Yoga Strap is y...</span>
<span class="t" style="left:1399.62px;top:654.00px;font-size:18.60px;letter-spacing:0.590px;color:#3d3d3d;">WT19</span>
<span class="t" style="left:1546.97px;top:654.00px;font-size:18.60px;letter-spacing:-1.571px;color:#3d3d3d;transform:scaleX(1.100);transform-origin:0 0;">21</span>
<span class="t" style="left:1743.18px;top:654.00px;font-size:18.60px;letter-spacing:1.122px;color:#3d3d3d;">simple</span>
<span class="t rn" style="left:281.71px;top:694.00px;font-size:18.60px;letter-spacing:0.300px;transform:scaleX(1.080);transform-origin:0 0;">7</span>
<span class="t" style="left:403.64px;top:700.00px;font-size:18.60px;letter-spacing:-0.089px;color:#3d3d3d;transform:scaleX(1.080);transform-origin:0 0;">41872</span>
<span class="t" style="left:480.77px;top:700.00px;font-size:18.60px;letter-spacing:0.636px;color:#3d3d3d;">Elevate Your Game: Premium 5...</span>
<span class="t" style="left:853.48px;top:700.00px;font-size:18.60px;letter-spacing:0.523px;color:#3d3d3d;">The Sprite Stasis Ball is a ...</span>
<span class="t" style="left:1399.62px;top:700.00px;font-size:18.60px;letter-spacing:1.405px;color:#3d3d3d;">WT20</span>
<span class="t" style="left:1546.97px;top:700.00px;font-size:18.60px;letter-spacing:1.065px;color:#3d3d3d;transform:scaleX(1.100);transform-origin:0 0;">23</span>
<span class="t" style="left:1743.18px;top:700.00px;font-size:18.60px;letter-spacing:1.122px;color:#3d3d3d;">simple</span>
<span class="t rn" style="left:281.71px;top:740.00px;font-size:18.60px;letter-spacing:0.300px;transform:scaleX(1.080);transform-origin:0 0;">8</span>
<span class="t" style="left:403.64px;top:746.00px;font-size:18.60px;letter-spacing:0.020px;color:#3d3d3d;transform:scaleX(1.080);transform-origin:0 0;">41873</span>
<span class="t" style="left:480.77px;top:746.00px;font-size:18.60px;letter-spacing:0.772px;color:#3d3d3d;">Luxurious 55 cm Sprite Stasis ...</span>
<span class="t" style="left:852.18px;top:746.00px;font-size:18.60px;letter-spacing:0.839px;color:#3d3d3d;">Introducing the Sprite Sta...</span>
<span class="t" style="left:1399.62px;top:746.00px;font-size:18.60px;letter-spacing:0.332px;color:#3d3d3d;">WT21</span>
<span class="t" style="left:1546.97px;top:746.00px;font-size:18.60px;letter-spacing:1.065px;color:#3d3d3d;transform:scaleX(1.100);transform-origin:0 0;">23</span>
<span class="t" style="left:1743.18px;top:746.00px;font-size:18.60px;letter-spacing:1.122px;color:#3d3d3d;">simple</span>
<span class="t rn" style="left:281.71px;top:786.00px;font-size:18.60px;letter-spacing:0.300px;transform:scaleX(1.080);transform-origin:0 0;">9</span>
<span class="t" style="left:403.64px;top:792.00px;font-size:18.60px;letter-spacing:-0.187px;color:#3d3d3d;transform:scaleX(1.080);transform-origin:0 0;">41874</span>
<span class="t" style="left:480.77px;top:792.00px;font-size:18.60px;letter-spacing:0.650px;color:#3d3d3d;">Elevate Your Play: Luxurious 55...</span>
<span class="t" style="left:852.37px;top:792.00px;font-size:18.60px;letter-spacing:0.723px;color:#3d3d3d;">Discover the Sprite Stasis ...</span>
<span class="t" style="left:1399.62px;top:792.00px;font-size:18.60px;letter-spacing:1.341px;color:#3d3d3d;">WT22</span>
<span class="t" style="left:1546.97px;top:792.00px;font-size:18.60px;letter-spacing:1.065px;color:#3d3d3d;transform:scaleX(1.100);transform-origin:0 0;">23</span>
<span class="t" style="left:1743.18px;top:792.00px;font-size:18.60px;letter-spacing:1.122px;color:#3d3d3d;">simple</span>
<span class="t rn" style="left:275.97px;top:831.00px;font-size:18.60px;letter-spacing:0.300px;transform:scaleX(1.080);transform-origin:0 0;">10</span>
<span class="t" style="left:403.64px;top:837.00px;font-size:18.60px;letter-spacing:0.011px;color:#3d3d3d;transform:scaleX(1.080);transform-origin:0 0;">41875</span>
<span class="t" style="left:480.77px;top:837.00px;font-size:18.60px;letter-spacing:0.636px;color:#3d3d3d;">Elevate Your Game: Premium 6...</span>
<span class="t" style="left:853.48px;top:837.00px;font-size:18.60px;letter-spacing:0.787px;color:#3d3d3d;">Transform your fitness ro...</span>
<span class="t" style="left:1399.62px;top:837.00px;font-size:18.60px;letter-spacing:1.435px;color:#3d3d3d;">WT23</span>
<span class="t" style="left:1546.97px;top:837.00px;font-size:18.60px;letter-spacing:0.183px;color:#3d3d3d;transform:scaleX(1.100);transform-origin:0 0;">27</span>
<span class="t" style="left:1743.18px;top:837.00px;font-size:18.60px;letter-spacing:1.122px;color:#3d3d3d;">simple</span>
<span class="t rn" style="left:276.71px;top:877.00px;font-size:18.60px;letter-spacing:0.300px;transform:scaleX(1.080);transform-origin:0 0;">11</span>
<span class="t" style="left:403.64px;top:883.00px;font-size:18.60px;letter-spacing:0.321px;color:#3d3d3d;transform:scaleX(1.080);transform-origin:0 0;">41876</span>
<span class="t" style="left:480.77px;top:883.00px;font-size:18.60px;letter-spacing:0.648px;color:#3d3d3d;">Elevate Playtime: Luxe 65 cm S...</span>
<span class="t" style="left:852.18px;top:883.00px;font-size:18.60px;letter-spacing:0.839px;color:#3d3d3d;">Introducing the Sprite Sta...</span>
<span class="t" style="left:1399.62px;top:883.00px;font-size:18.60px;letter-spacing:1.344px;color:#3d3d3d;">WT24</span>
<span class="t" style="left:1546.97px;top:883.00px;font-size:18.60px;letter-spacing:0.183px;color:#3d3d3d;transform:scaleX(1.100);transform-origin:0 0;">27</span>
<span class="t" style="left:1743.18px;top:883.00px;font-size:18.60px;letter-spacing:1.122px;color:#3d3d3d;">simple</span>
<span class="t rn" style="left:275.97px;top:923.00px;font-size:18.60px;letter-spacing:0.300px;transform:scaleX(1.080);transform-origin:0 0;">12</span>
<span class="t" style="left:403.64px;top:929.00px;font-size:18.60px;letter-spacing:-0.274px;color:#3d3d3d;transform:scaleX(1.080);transform-origin:0 0;">41877</span>
<span class="t" style="left:480.77px;top:929.00px;font-size:18.60px;letter-spacing:0.690px;color:#3d3d3d;">Elevate Playtime: Luxurious 65 ...</span>
<span class="t" style="left:853.48px;top:929.00px;font-size:18.60px;letter-spacing:0.787px;color:#3d3d3d;">Transform your fitness ro...</span>
<span class="t" style="left:1399.62px;top:929.00px;font-size:18.60px;letter-spacing:1.290px;color:#3d3d3d;">WT25</span>
<span class="t" style="left:1546.97px;top:929.00px;font-size:18.60px;letter-spacing:0.183px;color:#3d3d3d;transform:scaleX(1.100);transform-origin:0 0;">27</span>
<span class="t" style="left:1743.18px;top:929.00px;font-size:18.60px;letter-spacing:1.122px;color:#3d3d3d;">simple</span>
<span class="t rn" style="left:275.97px;top:969.00px;font-size:18.60px;letter-spacing:0.300px;transform:scaleX(1.080);transform-origin:0 0;">13</span>
<span class="t" style="left:403.64px;top:975.00px;font-size:18.60px;letter-spacing:0.365px;color:#3d3d3d;transform:scaleX(1.080);transform-origin:0 0;">41878</span>
<span class="t" style="left:481.51px;top:975.00px;font-size:18.60px;letter-spacing:0.350px;color:#3d3d3d;">&quot;Luxurious 75cm Sprite Stasis...</span>
<span class="t" style="left:853.48px;top:975.00px;font-size:18.60px;letter-spacing:0.787px;color:#3d3d3d;">Transform your fitness ro...</span>
<span class="t" style="left:1399.62px;top:975.00px;font-size:18.60px;letter-spacing:1.435px;color:#3d3d3d;">WT26</span>
<span class="t" style="left:1547.22px;top:975.00px;font-size:18.60px;letter-spacing:0.956px;color:#3d3d3d;transform:scaleX(1.100);transform-origin:0 0;">32</span>
<span class="t" style="left:1743.18px;top:975.00px;font-size:18.60px;letter-spacing:1.122px;color:#3d3d3d;">simple</span>
</div>
</div>
<!-- ================= sidebar ================= -->
<div id="side" class="abs"></div>
<div id="sidemenu">
<svg class="di" style="left:11.2px;top:118.0px" width="28" height="28" viewBox="0 0 20 20"><path fill="#a0a5aa" d="M3.76 16h12.48c1.1-1.37 1.76-3.11 1.76-5 0-4.42-3.58-8-8-8s-8 3.580-8 8c0 1.890.660 3.630 1.760 5zM10 4c.55 0 1 .45 1 1s-.45 1-1 1-1-.45-1-1 .45-1 1-1zM6 6c.55 0 1 .45 1 1s-.45 1-1 1-1-.45-1-1 .45-1 1-1zm8 0c.55 0 1 .45 1 1s-.45 1-1 1-1-.45-1-1 .45-1 1-1zm-5.370 5.550L12 7v6c0 1.100-.9 2-2 2s-2-.9-2-2c0-.570.240-1.080.630-1.450zM4 10c.55 0 1 .45 1 1s-.45 1-1 1-1-.45-1-1 .45-1 1-1zm12 0c.55 0 1 .45 1 1s-.45 1-1 1-1-.45-1-1 .45-1 1-1zm-5 3c0-.55-.45-1-1-1s-1 .45-1 1 .45 1 1 1 1-.45 1-1z"/></svg>
<svg class="di" style="left:11.2px;top:180.9px" width="28" height="28" viewBox="0 0 20 20"><path fill="#a0a5aa" d="M10.44 3.02l1.82-1.82 6.36 6.35-1.83 1.820c-1.050-.680-2.480-.570-3.410.360l-.75.75c-.92.930-1.040 2.350-.350 3.410l-1.830 1.820-2.410-2.410-2.800 2.790c-.42.420-3.380 2.710-3.800 2.290s1.860-3.390 2.280-3.810l2.790-2.790L4.100 9.360l1.830-1.820c1.050.69 2.480.570 3.400-.360l.75-.75c.93-.92 1.050-2.350.36-3.410z"/></svg>
<svg class="di" style="left:11.2px;top:229.3px" width="28" height="28" viewBox="0 0 20 20"><path fill="#a0a5aa" d="M13 11V4c0-.55-.45-1-1-1h-1.670L9 1H5L3.670 3H2c-.55 0-1 .45-1 1v7c0 .55.45 1 1 1h10c.55 0 1-.45 1-1zM7 4.500c1.380 0 2.500 1.120 2.500 2.500S8.380 9.500 7 9.500 4.500 8.380 4.500 7 5.620 4.500 7 4.500zM14 6h5v10.500c0 1.380-1.120 2.500-2.500 2.500S14 17.880 14 16.500s1.120-2.500 2.500-2.500c.17 0 .34.020.5.050V9h-3V6zm-4 8.050V13h2v3.500c0 1.380-1.120 2.500-2.500 2.500S7 17.880 7 16.500 8.120 14 9.500 14c.17 0 .34.020.5.050z"/></svg>
<svg class="di" style="left:11.2px;top:276.8px" width="28" height="28" viewBox="0 0 20 20"><path fill="#a0a5aa" d="M6 15V2h10v13H6zm-1 1h8v2H3V5h2v11z"/></svg>
<svg class="di" style="left:11.2px;top:325.5px" width="28" height="28" viewBox="0 0 20 20"><path fill="#a0a5aa" d="M5 2h9c1.1 0 2 .9 2 2v7c0 1.1-.9 2-2 2h-2l-5 5v-5H5c-1.1 0-2-.9-2-2V4c0-1.1.9-2 2-2z"/></svg>
<svg class="di" style="left:11.2px;top:436.2px" width="28" height="28" viewBox="0 0 20 20"><path fill="#a0a5aa" d="M19 4v2H1V4h18zM2 7h16v10H2V7zm11 3V9H7v1h6z"/></svg>
<svg class="di" style="left:11.2px;top:532.0px" width="28" height="28" viewBox="0 0 20 20"><path fill="#a0a5aa" d="M18 18V2h-4v16h4zm-6 0V7H8v11h4zm-6 0v-8H2v8h4z"/></svg>
<svg class="di" style="left:11.2px;top:580.1px" width="28" height="28" viewBox="0 0 20 20"><path fill="#a0a5aa" d="M18.150 5.940c.46 1.620.38 3.220-.02 4.480-.42 1.280-1.260 2.180-2.300 2.480-.16.060-.26.060-.4.060-.06.020-.12.020-.18.020-.06.020-.14.020-.22.020h-6.800l2.220 5.500c.02.140-.06.260-.14.340-.08.100-.24.160-.34.160H6.950c-.1 0-.26-.06-.34-.16-.08-.08-.16-.2-.14-.34l-1-5.500H4.250l-.02-.02c-.5.060-1.080-.18-1.540-.62s-.88-1.080-1.060-1.880c-.24-.8-.2-1.560-.02-2.200.18-.62.580-1.080 1.060-1.300l.02-.02 9-5.400c.1-.06.180-.10.240-.16.060-.04.140-.08.240-.12.160-.08.280-.12.500-.18 1.040-.3 2.240.1 3.220.98s1.840 2.240 2.260 3.860zm-2.580 5.980h-.02c.4-.1.740-.34 1.040-.7.580-.7.860-1.760.86-3.040 0-.64-.1-1.300-.28-1.980-.34-1.360-1.020-2.500-1.780-3.240s-1.680-1.100-2.460-.88c-.82.220-1.400.96-1.700 2-.32 1.040-.28 2.360.06 3.720.38 1.360 1 2.500 1.800 3.240.78.740 1.620 1.100 2.480.88zm-2.540-7.520c.34-.1.690.08 1.040.42.320.34.620.86.760 1.460.16.620.14 1.200.04 1.660-.12.480-.34.780-.68.880-.34.100-.68-.06-1.040-.4-.32-.34-.62-.86-.78-1.480-.14-.6-.14-1.180-.02-1.660.1-.46.340-.78.680-.88z"/></svg>
<svg class="di" style="left:11.2px;top:642.9px" width="28" height="28" viewBox="0 0 20 20"><path fill="#a0a5aa" d="M14.48 11.060L7.410 3.990l1.500-1.500c.5-.56 2.300-.47 3.510.32 1.210.8 1.430 1.280 2.910 2.100 1.180.64 2.450 1.260 4.450.85zm-.71.710L6.700 4.700 4.930 6.470c-.39.390-.39 1.020 0 1.410l1.060 1.060c.39.390.39 1.030 0 1.420-.6.6-1.430 1.110-2.210 1.690-.35.260-.7.530-1.010.840C1.430 14.230.4 16.080 1.400 17.070c.99 1 2.840-.03 4.180-1.360.31-.31.580-.66.850-1.020.57-.78 1.080-1.610 1.690-2.210.39-.39 1.020-.39 1.410 0l1.060 1.060c.39.390 1.020.390 1.410 0z"/></svg>
<svg class="di" style="left:11.2px;top:691.1px" width="28" height="28" viewBox="0 0 20 20"><path fill="#a0a5aa" d="M13.110 4.360L9.870 7.600 8 5.730l3.240-3.240c.35-.34 1.050-.2 1.560.32.520.51.660 1.210.31 1.550zm-8 1.770l.91-1.120 9.010 9.010-1.190.84c-.71.710-2.630 1.160-3.820 1.160H6.140L4.900 17.260c-.59.590-1.540.59-2.120 0-.59-.58-.59-1.530 0-2.120l1.240-1.240v-3.880c0-1.130.4-3.190 1.090-3.890zm7.260 3.970l3.240-3.240c.34-.35 1.040-.21 1.550.31.520.51.660 1.210.31 1.550l-3.240 3.250z"/></svg>
<svg class="di" style="left:11.2px;top:738.7px" width="28" height="28" viewBox="0 0 20 20"><path fill="#a0a5aa" d="M10 9.250c-2.270 0-2.730-3.440-2.730-3.440C7 4.020 7.820 2 9.970 2c2.160 0 2.980 2.020 2.710 3.810 0 0-.41 3.440-2.680 3.440zm0 2.570L12.720 10c2.390 0 4.520 2.330 4.520 4.530v2.490s-3.650 1.130-7.240 1.130c-3.650 0-7.240-1.130-7.240-1.130v-2.490c0-2.250 1.940-4.480 4.470-4.480z"/></svg>
<svg class="di" style="left:11.2px;top:786.4px" width="28" height="28" viewBox="0 0 20 20"><path fill="#a0a5aa" d="M16.680 9.770c-1.340 1.340-3.300 1.670-4.950.99l-5.410 6.520c-.99.990-2.590.990-3.580 0s-.99-2.590 0-3.570l6.520-5.420c-.68-1.650-.35-3.610.99-4.950 1.280-1.280 3.120-1.620 4.720-1.060l-2.890 2.890 2.820 2.820 2.860-2.870c.53 1.580.18 3.390-1.080 4.650zM3.810 16.210c.4.390 1.040.39 1.430 0 .4-.4.4-1.040 0-1.430-.39-.4-1.030-.4-1.430 0-.39.390-.39 1.030 0 1.430z"/></svg>
<svg class="di" style="left:11.8px;top:834.1px" width="28" height="28" viewBox="0 0 20 20"><path fill="#a0a5aa" d="M18 16V4c0-.55-.45-1-1-1H3c-.55 0-1 .45-1 1v12c0 .55.45 1 1 1h14c.55 0 1-.45 1-1zM8 11h1c.55 0 1 .45 1 1s-.45 1-1 1H8v1.500c0 .28-.22.5-.5.5s-.5-.22-.5-.5V13H6c-.55 0-1-.45-1-1s.45-1 1-1h1V5.500c0-.28.220-.5.5-.5s.5.220.5.5V11zm5-2h-1c-.55 0-1-.45-1-1s.45-1 1-1h1V5.500c0-.28.220-.5.5-.5s.5.220.5.5V7h1c.55 0 1 .45 1 1s-.45 1-1 1h-1v5.500c0 .28-.22.500-.5.500s-.5-.22-.5-.5V9z"/></svg>
<svg style="left:5px;top:64px" width="40" height="40" viewBox="-20 -20 40 40"><g transform="translate(1.450,-1.500) rotate(45)" fill="#a0a5aa"><path d="M0-15.500C3.500-12 5-7 5-2C5 3 4 7 3 9.500H-3C-4 7-5 3-5-2C-5-7-3.500-12 0-15.500zM0-9a1.350 2.300 0 1 0 .01 0z" fill-rule="evenodd"/><path d="M-4.600 .6C-8.200 2.300-9.800 6-7.600 12.800C-6.800 10.200-5.400 8.800-3.300 8.400zM-5.500 3.300C-7.200 4.400-7.800 6.400-7.300 8.800C-6.500 7.500-5.700 6.900-4.500 6.500z" fill-rule="evenodd"/><path d="M4.600 .6C8.200 2.300 9.800 6 7.600 12.800C6.800 10.200 5.400 8.800 3.300 8.400zM5.500 3.300C7.200 4.400 7.800 6.400 7.300 8.800C6.500 7.500 5.700 6.900 4.500 6.500z" fill-rule="evenodd"/><path d="M-2.200 10.300H2.200L0 15.500z" opacity=".8"/><rect x="-.8" y="1.500" width="1.600" height="6.500" rx=".8" fill="#1d2327"/></g></svg>
<svg style="left:0;top:380px" width="50" height="40" viewBox="0 380 50 40"><path fill="none" stroke="#adb1b5" stroke-width="4.600" stroke-linejoin="round" stroke-linecap="round" d="M13.500 396.900h3.200L19.500 407 26.100 397.100 28.900 407 36.300 396.700"/></svg>
<svg style="left:0;top:480px" width="50" height="40" viewBox="0 480 50 40"><rect x="12.500" y="488.600" width="25" height="19" rx="1.800" fill="none" stroke="#a0a5aa" stroke-width="3"/><path fill="none" stroke="#a0a5aa" stroke-width="2.500" d="M28.300 495.800c0-2.600-6.400-2.800-6.400-.1 0 3 6.500 1.600 6.500 4.700 0 2.800-6.700 2.500-6.700-.2"/><path fill="#a0a5aa" d="M23.900 491.200h2.300v2.600h-2.300zM23.900 502.500h2.300v2.600h-2.300z"/></svg>
<svg style="left:12.0px;top:896.8px" width="27" height="30" viewBox="-1 -4 27 30"><path fill="#a0a5aa" d="M3 0H21a3.200 3.200 0 0 1 3.200 3.200V20.200H5.500C2 20.200 0 18 0 15V3C0 1.200 1.200 0 3 0Z"/><path fill="none" stroke="#a0a5aa" stroke-width="4.400" stroke-linecap="butt" d="M19-3.700L10.300 17.300c-1 2.600-2.400 5-5 5.800"/><path fill="none" stroke="#1d2327" stroke-width="2.500" stroke-linecap="butt" stroke-linejoin="round" d="M19-3.700L10.300 17.300c-1 2.600-2.400 5-5 5.800M6.600 4.400L11.200 15.600"/></svg>
<svg style="left:0;top:940px" width="50" height="40" viewBox="0 940 50 40"><path fill="#a0a5aa" d="M11 947h26v2h-23.800v19H11z"/><rect x="13.800" y="949.600" width="24.600" height="19.800" fill="none" stroke="#a0a5aa" stroke-width="1.200"/><path fill="#a0a5aa" d="M27.600 959.600L33.400 953.200h-3.200L25.400 958.600zM27.600 959.600L34.800 965.900h-9.600l0-1.800h4.400L25.400 960.600z"/><path fill="none" stroke="#a0a5aa" stroke-width="1.100" stroke-dasharray="2.600 1.200" d="M21.500 954h7M20.500 956.800h6M18.500 959.600h8M20.500 962.400h6M20 965.200h6"/></svg>
<span class="t" style="left:50.49px;top:75.00px;font-size:20.00px;letter-spacing:0.169px;color:#f0f0f1;">Site Assist</span>
<span class="t" style="left:49.76px;top:123.00px;font-size:20.00px;letter-spacing:0.298px;color:#f0f0f1;">Dashboard</span>
<span class="t" style="left:49.76px;top:186.00px;font-size:20.00px;letter-spacing:0.283px;color:#f0f0f1;">Posts</span>
<span class="t" style="left:49.76px;top:234.00px;font-size:20.00px;letter-spacing:0.089px;color:#f0f0f1;">Media</span>
<span class="t" style="left:49.76px;top:282.00px;font-size:20.00px;letter-spacing:-0.139px;color:#f0f0f1;">Pages</span>
<span class="t" style="left:50.38px;top:329.00px;font-size:20.00px;letter-spacing:0.219px;color:#f0f0f1;">Comments</span>
<span class="t" style="left:51.31px;top:393.00px;font-size:20.00px;letter-spacing:0.041px;color:#f0f0f1;">WooCommerce</span>
<span class="t" style="left:49.76px;top:440.00px;font-size:20.00px;letter-spacing:0.475px;color:#f0f0f1;">Products</span>
<span class="t" style="left:49.76px;top:488.00px;font-size:20.00px;letter-spacing:0.047px;color:#f0f0f1;">Payments</span>
<span class="t" style="left:51.36px;top:536.00px;font-size:20.00px;letter-spacing:0.204px;color:#f0f0f1;">Analytics</span>
<span class="t" style="left:49.76px;top:584.00px;font-size:20.00px;letter-spacing:0.502px;color:#f0f0f1;">Marketing</span>
<span class="t" style="left:51.36px;top:647.00px;font-size:20.00px;letter-spacing:0.106px;color:#f0f0f1;">Appearance</span>
<span class="t" style="left:49.76px;top:695.00px;font-size:20.00px;letter-spacing:0.192px;color:#f0f0f1;">Plugins</span>
<span class="t" style="left:49.86px;top:743.00px;font-size:20.00px;letter-spacing:0.208px;color:#f0f0f1;">Users</span>
<span class="t" style="left:50.95px;top:791.00px;font-size:20.00px;letter-spacing:0.217px;color:#f0f0f1;">Tools</span>
<span class="t" style="left:50.49px;top:839.00px;font-size:20.00px;letter-spacing:0.366px;color:#f0f0f1;">Settings</span>
<span class="t" style="left:50.96px;top:902.00px;font-size:20.00px;letter-spacing:-0.477px;color:#f0f0f1;">Yoast SEO</span>
<span class="t" style="left:49.76px;top:950.00px;font-size:20.00px;letter-spacing:0.193px;color:#f0f0f1;">Kadence</span>
</div>
<!-- ================= admin bar ================= -->
<div id="bar" class="abs"></div>
<div id="barmenu">
<svg style="left:10px;top:7px" width="28" height="28" viewBox="0 0 20 20"><circle cx="10" cy="10" r="10" fill="#a0a5aa"/><path fill="#1d2327" transform="translate(10 10) scale(.965) translate(-10 -10)" d="M20 10c0-5.51-4.49-10-10-10C4.48 0 0 4.49 0 10c0 5.52 4.48 10 10 10 5.51 0 10-4.48 10-10zM7.78 15.37L4.37 6.22c.55-.02 1.17-.08 1.17-.08.5-.06.44-1.13-.06-1.11 0 0-1.45.11-2.37.11-.18 0-.37 0-.58-.01C4.12 2.69 6.87 1.11 10 1.11c2.33 0 4.45.87 6.05 2.34-.68-.11-1.65.39-1.65 1.58 0 .74.45 1.36.9 2.1.35.61.55 1.36.55 2.46 0 1.49-1.4 5-1.4 5l-3.03-8.37c.54-.02.82-.17.82-.17.5-.05.44-1.25-.06-1.22 0 0-1.44.12-2.38.12-.87 0-2.33-.12-2.33-.12-.5-.03-.56 1.2-.06 1.22l.92.08 1.26 3.41zM17.41 10c.24-.64.74-1.87.43-4.25.7 1.29 1.05 2.71 1.05 4.25 0 3.29-1.73 6.24-4.4 7.78.97-2.59 1.94-5.2 2.92-7.78zM6.1 18.09C3.12 16.65 1.11 13.53 1.11 10c0-1.3.23-2.48.72-3.59C3.25 10.3 4.67 14.2 6.1 18.09zm4.03-6.63l2.58 6.98c-.86.29-1.76.45-2.71.45-.79 0-1.57-.11-2.29-.33.81-2.38 1.62-4.74 2.42-7.1z"/><circle cx="10" cy="10" r="9.600" fill="none" stroke="#a0a5aa" stroke-width=".8"/></svg>
<svg class="di" style="left:58.5px;top:6.4px" width="28" height="28" viewBox="0 0 20 20"><path fill="#a0a5aa" d="M16 8.5l1.53 1.53-1.06 1.06L10 4.62l-6.47 6.47-1.06-1.06L10 2.5l4 4v-2h2v4zm-6-2.460l6 5.990V18H4v-5.970zM12 17v-5H8v5h4z"/></svg>
<div class="abs" style="left:169px;top:9px;width:50px;height:25px;border-radius:3px;background:#e8f3e8"></div>
<svg class="di" style="left:227.8px;top:9.2px" width="28" height="28" viewBox="0 0 20 20"><path fill="#a0a5aa" d="M5 2h9c1.1 0 2 .9 2 2v7c0 1.1-.9 2-2 2h-2l-5 5v-5H5c-1.1 0-2-.9-2-2V4c0-1.1.9-2 2-2z"/></svg>
<svg class="di" style="left:297.2px;top:9.6px" width="28" height="28" viewBox="0 0 20 20"><path fill="#a0a5aa" d="M17 6.750v3.500h-4.750v4.750h-3.500v-4.750H4v-3.500h4.750V2h3.500v4.750z"/></svg>
<svg style="left:394.0px;top:7.0px" width="27" height="30" viewBox="-1 -4 27 30"><path fill="#a0a5aa" d="M3 0H21a3.200 3.200 0 0 1 3.200 3.200V20.200H5.500C2 20.200 0 18 0 15V3C0 1.200 1.200 0 3 0Z"/><path fill="none" stroke="#a0a5aa" stroke-width="4.400" stroke-linecap="butt" d="M19-3.700L10.300 17.300c-1 2.600-2.400 5-5 5.800"/><path fill="none" stroke="#1d2327" stroke-width="2.500" stroke-linecap="butt" stroke-linejoin="round" d="M19-3.700L10.300 17.300c-1 2.600-2.400 5-5 5.800M6.600 4.400L11.200 15.600"/></svg>
<div class="abs" style="left:1869px;top:8px;width:25.300px;height:25px;background:#c9c9c9;overflow:hidden"><svg style="left:0;top:0" width="25.300" height="25" viewBox="0 0 25.300 25"><circle cx="12.650" cy="11" r="5.300" fill="#fff"/><path fill="#fff" d="M3 25c0-5.500 4-9 9.650-9s9.650 3.500 9.650 9z"/></svg></div>
<span class="t" style="left:94.87px;top:13.00px;font-size:18.60px;letter-spacing:0.325px;color:#f0f0f1;">My Site</span>
<span class="t" style="left:177.42px;top:14.00px;font-size:16.80px;letter-spacing:0.876px;color:#063a0c;">Live</span>
<span class="t" style="left:265.22px;top:13.00px;font-size:18.60px;color:#a3a8ad;transform:scaleX(1.080);transform-origin:0 0;">0</span>
<span class="t" style="left:333.17px;top:13.00px;font-size:18.60px;letter-spacing:0.389px;color:#f0f0f1;">New</span>
<span class="t" style="left:1686.67px;top:13.00px;font-size:18.60px;letter-spacing:0.444px;color:#f0f0f1;">Howdy, diegoportillo</span>
</div>
<div id="hs" class="abs"><i></i></div>
<div id="vs" class="abs"><i></i></div>
<div class="abs" style="left:1919px;top:0;width:1px;height:998px;background:#4a4a4a"></div>
<div class="abs" style="left:0;top:997px;width:1920px;height:1px;background:#505050"></div>
</body>
</html>
